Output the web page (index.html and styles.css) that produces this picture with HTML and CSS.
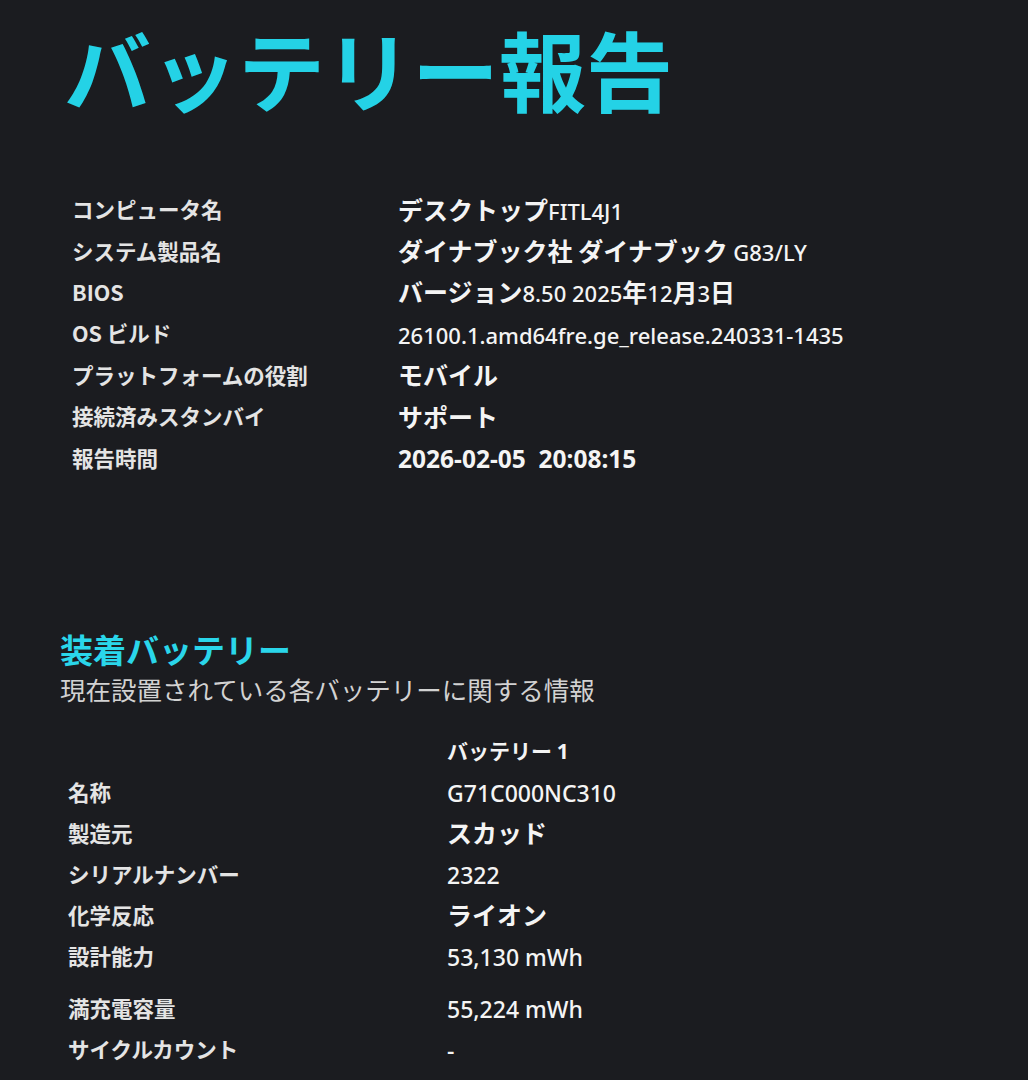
FILE: index.html
```html
<!DOCTYPE html>
<html lang="ja">
<head>
<meta charset="utf-8">
<title>バッテリー報告</title>
<link rel="stylesheet" href="styles.css">
</head>
<body>
<main class="page">
  <h1 class="title">バッテリー報告</h1>

  <table class="info">
    <tr><td class="lbl">コンピュータ名</td><td class="val"><b>デスクトップ</b><span class="lat">FITL4J1</span></td></tr>
    <tr><td class="lbl">システム製品名</td><td class="val"><b>ダイナブック社 ダイナブック</b> <span class="lat">G83/LY</span></td></tr>
    <tr><td class="lbl">BIOS</td><td class="val"><b>バージョン</b><span class="lat">8.50 2025</span><b>年</b><span class="lat">12</span><b>月</b><span class="lat">3</span><b>日</b></td></tr>
    <tr><td class="lbl">OS ビルド</td><td class="val"><span class="lat">26100.1.amd64fre.ge_release.240331-1435</span></td></tr>
    <tr><td class="lbl">プラットフォームの役割</td><td class="val"><b>モバイル</b></td></tr>
    <tr><td class="lbl">接続済みスタンバイ</td><td class="val"><b>サポート</b></td></tr>
    <tr><td class="lbl">報告時間</td><td class="val"><span class="lat date">2026-02-05&nbsp; 20:08:15</span></td></tr>
  </table>

  <section class="batteries">
    <h2 class="sect">装着バッテリー</h2>
    <p class="sub">現在設置されている各バッテリーに関する情報</p>

    <table class="bat">
      <tr class="head"><td class="lbl"></td><td class="val">バッテリー <span class="lat">1</span></td></tr>
      <tr><td class="lbl">名称</td><td class="val"><span class="lat">G71C000NC310</span></td></tr>
      <tr><td class="lbl">製造元</td><td class="val"><b>スカッド</b></td></tr>
      <tr><td class="lbl">シリアルナンバー</td><td class="val"><span class="lat">2322</span></td></tr>
      <tr><td class="lbl">化学反応</td><td class="val"><b>ライオン</b></td></tr>
      <tr class="tall"><td class="lbl">設計能力</td><td class="val"><span class="lat">53,130 mWh</span></td></tr>
      <tr><td class="lbl">満充電容量</td><td class="val"><span class="lat">55,224 mWh</span></td></tr>
      <tr><td class="lbl">サイクルカウント</td><td class="val"><span class="lat">-</span></td></tr>
    </table>
  </section>
</main>
</body>
</html>
```

FILE: styles.css
```css
html, body {
  margin: 0;
  padding: 0;
  background: #1b1c20;
}

body {
  font-family: "Noto Sans", "Noto Sans CJK JP", sans-serif;
  color: #f2f2f2;
  width: 1028px;
  height: 1080px;
  overflow: hidden;
}

.page {
  padding: 0 0 0 60px;
}

.title {
  margin: 0;
  padding-top: 12px;
  padding-left: 4px;
  font-family: "Noto Sans CJK JP", sans-serif;
  font-weight: 700;
  font-size: 87px;
  line-height: 112px;
  color: #24d2e6;
}

.info {
  border-collapse: collapse;
  margin-top: 64px;
  margin-left: 12px;
}

.info td,
.bat td {
  padding: 0;
  height: 41px;
  vertical-align: middle;
}

.info td {
  height: 41.4px;
}

.lbl {
  font-family: "Noto Sans CJK JP", sans-serif;
  font-weight: 700;
  font-size: 21.5px;
  color: #e4e4e4;
}

.info .lbl {
  width: 326px;
}

.val {
  font-family: "Noto Sans CJK JP", sans-serif;
  font-size: 25px;
  color: #f4f4f4;
}

.val b {
  font-weight: 700;
}

.lat {
  font-family: "Noto Sans", sans-serif;
  font-weight: 500;
  font-size: 22px;
}

.date {
  font-weight: 700;
  font-size: 24.5px;
}

.batteries {
  margin-top: 151px;
}

.sect {
  margin: 0;
  font-family: "Noto Sans CJK JP", sans-serif;
  font-weight: 700;
  font-size: 33px;
  line-height: 40px;
  color: #2ad6ea;
}

.sub {
  margin: 0;
  font-family: "Noto Sans CJK JP", sans-serif;
  font-size: 25.5px;
  line-height: 40px;
  color: #d2d2d2;
}

.bat {
  border-collapse: collapse;
  margin-top: 21px;
  margin-left: 8px;
}

.bat .lbl {
  width: 379px;
}

.bat .lat {
  font-size: 23px;
}

.bat .head .val {
  font-weight: 700;
  font-size: 21px;
}

.bat .head .lat {
  font-weight: 700;
  font-size: 21px;
}

.bat .tall td {
  padding-bottom: 11px;
}
```
